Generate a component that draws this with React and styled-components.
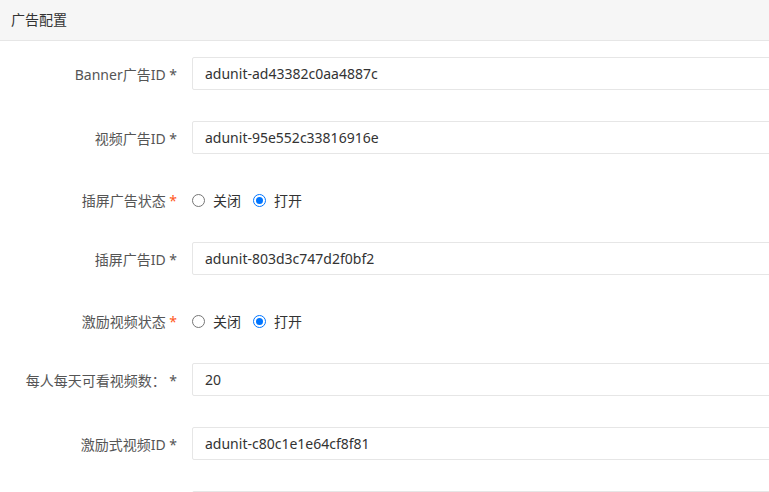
import React from 'react';
import styled, { createGlobalStyle } from 'styled-components';

const GlobalStyle = createGlobalStyle`
  html, body {
    margin: 0;
    padding: 0;
    background: #fff;
    overflow: hidden;
  }
  body {
    font-family: "Noto Sans", "Noto Sans CJK SC", sans-serif;
    color: #333;
  }
`;

const Card = styled.div`
  width: 100%;
  background: #fff;
`;

const CardHeader = styled.div`
  height: 40px;
  line-height: 40px;
  padding: 0 11px;
  background: #f6f6f6;
  border-bottom: 1px solid #e6e6e6;
  font-size: 14px;
  color: #333;
`;

const Form = styled.div`
  padding-top: 16px;
  display: flex;
  flex-direction: column;
  gap: 31px;
`;

const Row = styled.div`
  display: flex;
  align-items: center;
  box-sizing: border-box;
  height: ${p => (p.$radio ? '26px' : '33px')};
  padding-top: ${p => (p.$radio ? '4px' : '0')};
`;

const Label = styled.label`
  width: 177px;
  flex-shrink: 0;
  text-align: right;
  font-size: 14px;
  color: #555;
  white-space: pre;
`;

const Star = styled.span`
  color: ${p => (p.$red ? '#ff5722' : '#555')};
`;

const Input = styled.div`
  margin-left: 15px;
  width: 640px;
  flex-shrink: 0;
  height: 33px;
  box-sizing: border-box;
  border: 1px solid #e6e6e6;
  border-radius: 2px;
  padding-left: 12px;
  display: flex;
  align-items: center;
  font-size: 14px;
  color: #333;
`;

const RadioGroup = styled.div`
  margin-left: 15px;
  display: flex;
  align-items: center;
  gap: 12px;
  font-size: 14px;
  color: #333;
`;

const RadioItem = styled.span`
  display: inline-flex;
  align-items: center;
  gap: 8px;
`;

const Dot = styled.span`
  width: 13px;
  height: 13px;
  box-sizing: border-box;
  border-radius: 50%;
  border: 1px solid ${p => (p.$on ? '#0075ff' : '#767676')};
  display: inline-flex;
  align-items: center;
  justify-content: center;
  &::after {
    content: '';
    width: 7px;
    height: 7px;
    border-radius: 50%;
    background: ${p => (p.$on ? '#0075ff' : 'transparent')};
  }
`;

const fields = [
  { label: 'Banner广告ID', value: 'adunit-ad43382c0aa4887c' },
  { label: '视频广告ID', value: 'adunit-95e552c33816916e' },
  { label: '插屏广告状态', radio: true },
  { label: '插屏广告ID', value: 'adunit-803d3c747d2f0bf2' },
  { label: '激励视频状态', radio: true },
  { label: '每人每天可看视频数：', value: '20' },
  { label: '激励式视频ID', value: 'adunit-c80c1e1e64cf8f81' },
  { label: '', value: '' },
];

export default function App() {
  return (
    <>
      <GlobalStyle />
      <Card>
        <CardHeader>广告配置</CardHeader>
        <Form>
          {fields.map((f, i) => (
            <Row key={i} $radio={f.radio}>
              <Label>
                {f.label && (
                  <>
                    {f.label}{' '}
                    <Star $red={f.radio}>*</Star>
                  </>
                )}
              </Label>
              {f.radio ? (
                <RadioGroup>
                  <RadioItem><Dot />关闭</RadioItem>
                  <RadioItem><Dot $on />打开</RadioItem>
                </RadioGroup>
              ) : (
                <Input>{f.value}</Input>
              )}
            </Row>
          ))}
        </Form>
      </Card>
    </>
  );
}
